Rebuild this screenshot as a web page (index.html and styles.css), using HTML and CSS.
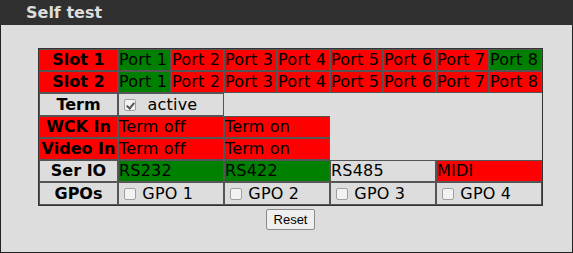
FILE: index.html
```html
<!DOCTYPE html>
<html lang="en">

<head>
    <meta charset="UTF-8" />
    <title>Self test</title>
    <link rel="stylesheet" href="styles.css">
</head>

<body>
    <div class="panel">
        <div class="panel-title">Self test</div>

        <div class="panel-body">
            <div class="test-wrap">
                <table class="test-grid">
                    <colgroup>
                        <col class="label-col">
                        <col class="port-col" span="8">
                    </colgroup>
                    <tr>
                        <th class="bad">Slot 1</th>
                        <td class="ok">Port 1</td>
                        <td class="bad">Port 2</td>
                        <td class="bad">Port 3</td>
                        <td class="bad">Port 4</td>
                        <td class="bad">Port 5</td>
                        <td class="bad">Port 6</td>
                        <td class="bad">Port 7</td>
                        <td class="ok">Port 8</td>
                    </tr>
                    <tr>
                        <th class="bad">Slot 2</th>
                        <td class="ok">Port 1</td>
                        <td class="bad">Port 2</td>
                        <td class="bad">Port 3</td>
                        <td class="bad">Port 4</td>
                        <td class="bad">Port 5</td>
                        <td class="bad">Port 6</td>
                        <td class="bad">Port 7</td>
                        <td class="bad">Port 8</td>
                    </tr>
                    <tr class="check-row">
                        <th>Term</th>
                        <td colspan="2"><input type="checkbox" checked disabled>&nbsp; active</td>
                    </tr>
                    <tr>
                        <th class="bad">WCK In</th>
                        <td class="bad" colspan="2">Term off</td>
                        <td class="bad" colspan="2">Term on</td>
                    </tr>
                    <tr>
                        <th class="bad">Video In</th>
                        <td class="bad" colspan="2">Term off</td>
                        <td class="bad" colspan="2">Term on</td>
                    </tr>
                    <tr>
                        <th>Ser IO</th>
                        <td class="ok" colspan="2">RS232</td>
                        <td class="ok" colspan="2">RS422</td>
                        <td colspan="2">RS485</td>
                        <td class="bad" colspan="2">MIDI</td>
                    </tr>
                    <tr class="check-row">
                        <th>GPOs</th>
                        <td colspan="2"><input type="checkbox" disabled> GPO 1</td>
                        <td colspan="2"><input type="checkbox" disabled> GPO 2</td>
                        <td colspan="2"><input type="checkbox" disabled> GPO 3</td>
                        <td colspan="2"><input type="checkbox" disabled> GPO 4</td>
                    </tr>
                </table>

                <div class="actions">
                    <button type="button">Reset</button>
                </div>
            </div>
        </div>
    </div>
</body>

</html>
```

FILE: styles.css
```css
* {
    box-sizing: border-box;
}

body {
    margin: 0;
    background-color: #dddddd;
    font-family: 'DejaVu Sans', Verdana, sans-serif;
}

.panel {
    height: 253px;
    background-color: #dddddd;
    border: 1px solid #222222;
    border-top: none;
}

.panel-title {
    height: 25px;
    line-height: 25px;
    margin: 0 -1px;
    padding-left: 26px;
    background-color: #303030;
    color: #dddddd;
    font-size: 16px;
    font-weight: bold;
}

.panel-body {
    padding: 23px 0 0 37px;
}

.test-wrap {
    width: 505px;
}

.test-grid {
    width: 505px;
    table-layout: fixed;
    border-collapse: separate;
    border-spacing: 0;
    border: 1px solid #333333;
    font-size: 16px;
}

.label-col {
    width: 79px;
}

.port-col {
    width: 53px;
}

.test-grid th,
.test-grid td {
    border: 1px solid #555555;
    padding: 0;
    line-height: 20px;
    white-space: nowrap;
    overflow: hidden;
    color: #000000;
}

.test-grid th {
    text-align: center;
    font-weight: bold;
}

.test-grid td {
    text-align: left;
    font-weight: normal;
    letter-spacing: 0.2px;
}

.test-grid .ok {
    background-color: #008000;
}

.test-grid .bad {
    background-color: #ff0000;
}

.check-row th,
.check-row td {
    line-height: 21px;
}

.check-row input {
    appearance: none;
    -webkit-appearance: none;
    position: relative;
    width: 12px;
    height: 12px;
    margin: 0 1px 0 5px;
    vertical-align: -1px;
    border: 1px solid #a0a0a0;
    border-radius: 2px;
    background-color: #f2f2f2;
}

/* small tick drawn with two borders */
.check-row input:checked::before {
    content: '';
    position: absolute;
    left: 3px;
    top: 1px;
    width: 3px;
    height: 6px;
    border-right: 2px solid #555555;
    border-bottom: 2px solid #555555;
    transform: rotate(40deg);
}

.actions {
    text-align: center;
    padding-top: 3px;
}

.actions button {
    font-family: 'Liberation Sans', Arial, sans-serif;
    font-size: 13px;
    height: 21px;
    padding: 0 7px;
    color: #000000;
    background-color: #efefef;
    border: 1px solid #8a8a8a;
    border-radius: 2px;
}
```
